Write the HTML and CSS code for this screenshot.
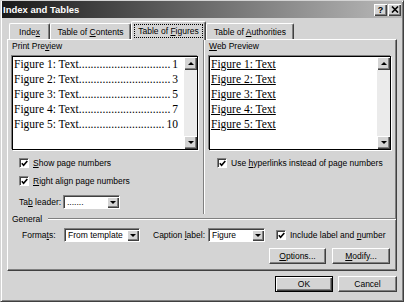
FILE: index.html
```html
<!DOCTYPE html>
<html lang="en">
<head>
    <meta charset="UTF-8">
    <title>Index and Tables</title>
    <link rel="stylesheet" href="styles.css">
</head>
<body>
    <div class="dialog">
        <div class="titlebar">
            <span class="title">Index and Tables</span>
            <div class="cap-btns">
                <span class="cap-btn">?</span>
                <span class="cap-btn">
                    <svg width="8" height="7" viewBox="0 0 8 7"><path d="M1 0.5 L7 6.5 M7 0.5 L1 6.5" stroke="#000" stroke-width="1.6" fill="none"/></svg>
                </span>
            </div>
        </div>

        <div class="tabs">
            <div class="tab tab-index"><span>Inde<u>x</u></span></div>
            <div class="tab tab-contents"><span>Table of <u>C</u>ontents</span></div>
            <div class="tab tab-figures active"><span class="focus">Table of <u>F</u>igures</span></div>
            <div class="tab tab-authorities"><span>Table of <u>A</u>uthorities</span></div>
        </div>

        <div class="panel">
            <div class="previews">
                <div class="col col-print">
                    <div class="label">Print Pre<u>v</u>iew</div>
                    <div class="listbox listbox-print">
                        <div class="lines">
                            <div class="entry"><span>Figure 1: Text</span><span class="dots">...............................</span><span>1</span></div>
                            <div class="entry"><span>Figure 2: Text</span><span class="dots">...............................</span><span>3</span></div>
                            <div class="entry"><span>Figure 3: Text</span><span class="dots">...............................</span><span>5</span></div>
                            <div class="entry"><span>Figure 4: Text</span><span class="dots">...............................</span><span>7</span></div>
                            <div class="entry"><span>Figure 5: Text</span><span class="dots">.............................</span><span>10</span></div>
                        </div>
                        <div class="scrollbar">
                            <span class="sb-btn"><span class="arrow-up"></span></span>
                            <span class="track"></span>
                            <span class="sb-btn"><span class="arrow-down"></span></span>
                        </div>
                    </div>
                    <div class="check first-check">
                        <span class="box"><svg width="7" height="7" viewBox="0 0 7 7"><path d="M0.8 3.2 L2.6 5.2 L6.3 1" stroke="#000" stroke-width="1.6" fill="none"/></svg></span>
                        <span><u>S</u>how page numbers</span>
                    </div>
                    <div class="check">
                        <span class="box"><svg width="7" height="7" viewBox="0 0 7 7"><path d="M0.8 3.2 L2.6 5.2 L6.3 1" stroke="#000" stroke-width="1.6" fill="none"/></svg></span>
                        <span><u>R</u>ight align page numbers</span>
                    </div>
                    <div class="leader">
                        <span class="leader-label">Ta<u>b</u> leader:</span>
                        <div class="combo combo-leader">
                            <span class="combo-text">.......</span>
                            <span class="combo-btn"><span class="arrow-down"></span></span>
                        </div>
                    </div>
                </div>

                <div class="col col-web">
                    <div class="label"><u>W</u>eb Preview</div>
                    <div class="listbox listbox-web">
                        <div class="lines">
                            <div class="link">Figure 1: Text</div>
                            <div class="link">Figure 2: Text</div>
                            <div class="link">Figure 3: Text</div>
                            <div class="link">Figure 4: Text</div>
                            <div class="link">Figure 5: Text</div>
                        </div>
                        <div class="scrollbar">
                            <span class="sb-btn"><span class="arrow-up"></span></span>
                            <span class="track"></span>
                            <span class="sb-btn"><span class="arrow-down"></span></span>
                        </div>
                    </div>
                    <div class="check first-check web-check">
                        <span class="box"><svg width="7" height="7" viewBox="0 0 7 7"><path d="M0.8 3.2 L2.6 5.2 L6.3 1" stroke="#000" stroke-width="1.6" fill="none"/></svg></span>
                        <span>Use <u>h</u>yperlinks instead of page numbers</span>
                    </div>
                </div>
            </div>

            <div class="group-title">
                <span>General</span>
                <span class="rule"></span>
            </div>

            <div class="general-row">
                <span class="fmt-label">Forma<u>t</u>s:</span>
                <div class="combo combo-formats">
                    <span class="combo-text">From template</span>
                    <span class="combo-btn"><span class="arrow-down"></span></span>
                </div>
                <span class="cap-label">Caption <u>l</u>abel:</span>
                <div class="combo combo-caption">
                    <span class="combo-text">Figure</span>
                    <span class="combo-btn"><span class="arrow-down"></span></span>
                </div>
                <div class="check inline-check">
                    <span class="box"><svg width="7" height="7" viewBox="0 0 7 7"><path d="M0.8 3.2 L2.6 5.2 L6.3 1" stroke="#000" stroke-width="1.6" fill="none"/></svg></span>
                    <span>Include label and <u>n</u>umber</span>
                </div>
            </div>

            <div class="general-btns">
                <div class="btn btn-options"><span><u>O</u>ptions...</span></div>
                <div class="btn btn-modify"><span><u>M</u>odify...</span></div>
            </div>
        </div>

        <div class="dialog-btns">
            <div class="btn btn-ok">OK</div>
            <div class="btn btn-cancel">Cancel</div>
        </div>
    </div>
</body>
</html>
```

FILE: styles.css
```css
* {
    margin: 0;
    padding: 0;
    box-sizing: border-box;
}

body {
    width: 404px;
    height: 302px;
    overflow: hidden;
    background-color: #d4d4d4;
    font-family: "Liberation Sans", Arial, sans-serif;
    font-size: 8.5px;
    color: #000;
}

u {
    text-decoration: underline;
}

/* Dialog frame */
.dialog {
    width: 404px;
    height: 302px;
    padding: 0 1px;
    border: 1px solid;
    border-color: #d4d4d4 #404040 #404040 #d4d4d4;
    box-shadow: inset 1px 1px 0 #fff, inset -1px -1px 0 #808080;
}

.titlebar {
    height: 17px;
    display: flex;
    align-items: center;
    justify-content: space-between;
    padding: 0 1px 0 1px;
    background: linear-gradient(to right, #1a1a1a, #bababa);
    color: #fff;
}

.title {
    font-weight: bold;
    font-size: 9.5px;
}

.cap-btns {
    display: flex;
    gap: 1px;
}

.cap-btn {
    width: 13px;
    height: 12px;
    display: flex;
    align-items: center;
    justify-content: center;
    background-color: #d4d4d4;
    box-shadow: inset 1px 1px 0 #fff, inset -1px -1px 0 #404040, inset -2px -2px 0 #808080;
    color: #000;
    font-weight: bold;
    font-size: 9px;
}

/* Tabs */
.tabs {
    display: flex;
    align-items: flex-end;
    height: 19px;
    margin-top: 2px;
    padding-left: 7px;
}

.tab {
    height: 16px;
    padding-top: 1px;
    display: flex;
    align-items: center;
    justify-content: center;
    white-space: nowrap;
    border-top: 1px solid #fff;
    border-left: 1px solid #fff;
    border-right: 1px solid #404040;
    border-radius: 2px 2px 0 0;
    box-shadow: inset -1px 0 0 #808080;
}

.tab-index { width: 41px; }
.tab-contents { width: 81px; }
.tab-figures { width: 75px; }
.tab-authorities { width: 88px; }

.tab.active {
    height: 19px;
    padding-top: 0;
    margin-bottom: -1px;
    position: relative;
    z-index: 1;
    background-color: #d4d4d4;
}

.focus {
    border: 1px dotted #000;
    padding: 1px 3px;
}

/* Tab panel */
.panel {
    width: 390px;
    height: 232px;
    margin-left: 5px;
    padding-left: 4px;
    border-top: 1px solid #fff;
    border-left: 1px solid #fff;
    border-right: 1px solid #404040;
    border-bottom: 1px solid #404040;
    box-shadow: inset -1px -1px 0 #808080;
}

.previews {
    display: flex;
    height: 174px;
}

.col {
    padding-top: 1px;
}

.col-print {
    width: 191px;
}

.col-web {
    flex: 1;
    padding-left: 5px;
    padding-right: 5px;
    border-left: 1px solid #808080;
    box-shadow: inset 1px 0 0 #fff;
}

.label {
    height: 10px;
    line-height: 10px;
}

.listbox {
    display: flex;
    height: 94px;
    margin-top: 5px;
    background-color: #fff;
    border: 1px solid #000;
    box-shadow: -1px -1px 0 #808080, 1px 1px 0 #fff;
}

.listbox-print { width: 186px; }
.listbox-web { width: 182px; }

.lines {
    flex: 1;
    min-width: 0;
    padding: 0 6px 0 1px;
    font-family: "Liberation Serif", "Times New Roman", serif;
    font-size: 11.5px;
    line-height: 15px;
}

.entry {
    display: flex;
    white-space: nowrap;
}

.dots {
    flex: 1;
    min-width: 0;
    letter-spacing: 0.08px;
}

.link {
    text-decoration: underline;
    white-space: nowrap;
}

.scrollbar {
    width: 13px;
    display: flex;
    flex-direction: column;
    background-color: #ebebeb;
}

.sb-btn {
    height: 13px;
    display: flex;
    align-items: center;
    justify-content: center;
    background-color: #d4d4d4;
    box-shadow: inset 1px 1px 0 #fff, inset -1px -1px 0 #404040, inset -2px -2px 0 #808080;
}

.track {
    flex: 1;
}

.arrow-up {
    width: 0;
    height: 0;
    border-left: 3px solid transparent;
    border-right: 3px solid transparent;
    border-bottom: 3px solid #000;
}

.arrow-down {
    width: 0;
    height: 0;
    border-left: 3px solid transparent;
    border-right: 3px solid transparent;
    border-top: 3px solid #000;
}

/* Check boxes */
.check {
    display: flex;
    align-items: center;
    gap: 4px;
    height: 18px;
    margin-left: 7px;
    white-space: nowrap;
}

.first-check {
    margin-top: 4px;
}

.web-check {
    margin-left: 8px;
}

.box {
    width: 10px;
    height: 10px;
    display: flex;
    align-items: center;
    justify-content: center;
    background-color: #fff;
    border: 1px solid;
    border-color: #808080 #fff #fff #808080;
    box-shadow: inset 1px 1px 0 #404040;
}

/* Combo boxes */
.leader {
    display: flex;
    align-items: center;
    height: 14px;
    margin-top: 5px;
    margin-left: 7px;
}

.leader-label {
    width: 44px;
}

.combo {
    display: flex;
    height: 14px;
    background-color: #fff;
    border: 1px solid;
    border-color: #808080 #fff #fff #808080;
    box-shadow: inset 1px 1px 0 #404040;
}

.combo-leader { width: 57px; }
.combo-formats { width: 76px; }
.combo-caption { width: 57px; }

.combo-text {
    flex: 1;
    padding-left: 3px;
    line-height: 12px;
    white-space: nowrap;
}

.combo-btn {
    width: 12px;
    margin: 1px 0 0;
    display: flex;
    align-items: center;
    justify-content: center;
    background-color: #d4d4d4;
    box-shadow: inset 1px 1px 0 #fff, inset -1px -1px 0 #404040, inset -2px -2px 0 #808080;
}

/* General group */
.group-title {
    display: flex;
    align-items: center;
    height: 10px;
}

.rule {
    flex: 1;
    height: 0;
    margin-left: 6px;
    border-top: 1px solid #808080;
    border-bottom: 1px solid #fff;
}

.general-row {
    display: flex;
    align-items: center;
    height: 14px;
    margin-top: 4px;
}

.fmt-label {
    width: 42px;
    margin-left: 10px;
}

.cap-label {
    width: 55px;
    margin-left: 13px;
}

.inline-check {
    margin-left: 11px;
}

.general-btns {
    display: flex;
    justify-content: flex-end;
    gap: 6px;
    margin-top: 6px;
    padding-right: 6px;
}

/* Push buttons */
.btn {
    height: 16px;
    display: flex;
    align-items: center;
    justify-content: center;
    background-color: #d4d4d4;
    border: 1px solid;
    border-color: #fff #404040 #404040 #fff;
    box-shadow: inset -1px -1px 0 #808080;
}

.btn-options { width: 57px; }
.btn-modify { width: 58px; }

.dialog-btns {
    display: flex;
    justify-content: flex-end;
    gap: 5px;
    margin-top: 5px;
    padding-right: 5px;
}

.btn-ok {
    width: 58px;
    border: 1px solid #000;
    box-shadow: inset 1px 1px 0 #fff, inset -1px -1px 0 #404040, inset -2px -2px 0 #808080;
}

.btn-cancel {
    width: 59px;
}
```
